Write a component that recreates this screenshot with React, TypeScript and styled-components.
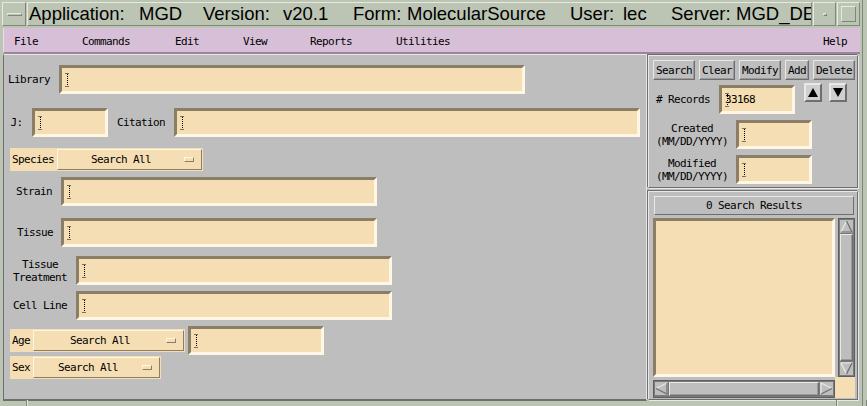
import React from "react";
import styled, { createGlobalStyle } from "styled-components";

const C = {
  frame: "#bcc4b4",
  frameLight: "#e4eadd",
  frameDark: "#7f877a",
  menu: "#d8bfd8",
  menuDark: "#9a869a",
  gray: "#bebebe",
  grayLight: "#e8e8e8",
  grayDark: "#6e6e6e",
  wheat: "#f5deb3",
  wheatDark: "#8b7e66",
  wheatLight: "#fff6e3",
};

const GlobalStyle = createGlobalStyle`
  html, body { margin: 0; padding: 0; }
  body {
    background: ${C.frame};
    width: 867px; height: 406px; overflow: hidden;
    font-family: "DejaVu Sans Mono", "Liberation Mono", monospace;
    font-size: 11px; letter-spacing: -0.62px; color: #000;
  }
  #root { width: 867px; height: 406px; }
`;

const Window = styled.div`
  width: 867px;
  height: 406px;
  box-sizing: border-box;
  display: flex;
  flex-direction: column;
  background:
    linear-gradient(to right, transparent 862px, ${C.frameDark} 862px, ${C.frameDark} 863px, transparent 863px),
    ${C.frame};
`;

/* ---------- title bar ---------- */
const TitleBar = styled.div`
  height: 28px;
  box-sizing: border-box;
  padding: 2px 7px 2px 2px;
  display: flex;
  gap: 1px;
`;

const TitleCell = styled.div<{ $w?: number }>`
  box-sizing: border-box;
  height: 24px;
  border: 1px solid;
  border-color: ${C.frameLight} ${C.frameDark} ${C.frameDark} ${C.frameLight};
  display: flex;
  align-items: center;
  justify-content: center;
  overflow: hidden;
  ${(p) => (p.$w ? `width:${p.$w}px; flex:none;` : "flex:1; justify-content:flex-start; padding-left:1px;")}
`;

const TitleSeg = styled.span<{ $w?: number }>`
  font-family: "Liberation Sans", Arial, sans-serif;
  font-size: 18.5px;
  letter-spacing: 0;
  white-space: nowrap;
  flex: none;
  ${(p) => (p.$w ? `width:${p.$w}px;` : "")}
`;

const MinusBar = styled.div`
  width: 15px;
  height: 3px;
  box-sizing: border-box;
  border-top: 1px solid ${C.frameLight};
  border-bottom: 1px solid ${C.frameDark};
  border-left: 1px solid ${C.frameLight};
  border-right: 1px solid ${C.frameDark};
`;

const Dot = styled.div`
  width: 4px;
  height: 3px;
  box-sizing: border-box;
  border: 1px solid;
  border-color: ${C.frameLight} ${C.frameDark} ${C.frameDark} ${C.frameLight};
`;

const MaxSquare = styled.div`
  width: 15px;
  height: 16px;
  box-sizing: border-box;
  border: 1px solid;
  border-color: ${C.frameLight} ${C.frameDark} ${C.frameDark} ${C.frameLight};
`;

/* ---------- menu bar ---------- */
const MenuBar = styled.div`
  height: 26px;
  box-sizing: border-box;
  margin: 0 7px 0 3px;
  background: ${C.menu};
  border-left: 1px solid #eadbea;
  border-bottom: 2px solid ${C.menuDark};
  display: flex;
  align-items: center;
  padding: 3px 13px 0 10px;
`;

const MenuItem = styled.span<{ $w?: number }>`
  flex: none;
  ${(p) => (p.$w ? `width:${p.$w}px;` : "")}
`;

const MenuSpacer = styled.div`
  flex: 1;
`;

/* ---------- main ---------- */
const Main = styled.div`
  height: 346px;
  margin: 0 7px 0 3px;
  display: grid;
  grid-template-columns: 644px 1fr;
  background: ${C.gray};
`;

const LeftPanel = styled.div`
  box-sizing: border-box;
  border-left: 1px solid ${C.grayDark};
  border-top: 1px solid ${C.grayLight};
  border-bottom: 2px solid;
  border-bottom-color: ${C.grayDark};
  border-right: 1px solid ${C.grayLight};
  display: flex;
  flex-direction: column;
  padding-top: 10px;
`;

const Row = styled.div<{ $mt: number; $pl: number; $gap?: number }>`
  display: flex;
  align-items: center;
  margin-top: ${(p) => p.$mt}px;
  padding-left: ${(p) => p.$pl}px;
  gap: ${(p) => (p.$gap ?? 9)}px;
`;

const Label = styled.span<{ $w?: number }>`
  flex: none;
  text-align: center;
  white-space: pre;
  line-height: 13px;
  ${(p) => (p.$w ? `width:${p.$w}px;` : "")}
`;

const Field = styled.div<{ $w: number; $h?: number }>`
  flex: none;
  width: ${(p) => p.$w}px;
  height: ${(p) => p.$h ?? 29}px;
  box-sizing: border-box;
  background: ${C.wheat};
  border: 3px solid;
  border-color: ${C.wheatDark} ${C.wheatLight} ${C.wheatLight} ${C.wheatDark};
  display: flex;
  align-items: center;
  padding-left: 3px;
`;

const FieldText = styled.span`
  margin-left: -5px;
`;

const Caret = () => (
  <svg width="5" height="14" viewBox="0 0 5 14" style={{ flex: "none" }}>
    <path d="M0.5 0.5h4M0.5 13.5h4" stroke="#000" strokeWidth="1" strokeDasharray="1 1" />
    <path d="M2.5 1v12" stroke="#000" strokeWidth="1" strokeDasharray="1 1" />
  </svg>
);

const OptionMenu = styled.div<{ $w: number }>`
  flex: none;
  width: ${(p) => p.$w}px;
  height: 23px;
  box-sizing: border-box;
  background: ${C.wheat};
  display: flex;
  align-items: stretch;
  padding: 1px 1px 1px 2px;
`;

const OptionLabel = styled.span`
  display: flex;
  align-items: center;
  padding-right: 3px;
`;

const OptionButton = styled.div`
  flex: 1;
  box-sizing: border-box;
  border: 1px solid;
  border-color: ${C.wheatLight} ${C.wheatDark} ${C.wheatDark} ${C.wheatLight};
  display: flex;
  align-items: center;
`;

const OptionText = styled.span`
  flex: 1;
  text-align: center;
`;

const Indicator = styled.span`
  flex: none;
  width: 10px;
  height: 5px;
  box-sizing: border-box;
  margin-right: 7px;
  border: 1px solid;
  border-color: ${C.wheatLight} ${C.wheatDark} ${C.wheatDark} ${C.wheatLight};
`;

/* ---------- right panel ---------- */
const RightPanel = styled.div`
  display: flex;
  flex-direction: column;
  gap: 3px;
  padding: 1px 2px 1px 1px;
  box-sizing: border-box;
`;

const Section = styled.div<{ $h: number }>`
  height: ${(p) => p.$h}px;
  box-sizing: border-box;
  border: 1px solid;
  border-color: ${C.grayLight} ${C.grayDark} ${C.grayDark} ${C.grayLight};
  box-shadow: -1px -1px 0 ${C.grayDark}, 1px 1px 0 ${C.grayLight};
  display: flex;
  flex-direction: column;
`;

const ButtonRow = styled.div`
  display: flex;
  gap: 4px;
  margin: 4px 0 0 4px;
`;

const PushButton = styled.div`
  height: 20px;
  box-sizing: border-box;
  padding: 0 2px;
  border: 1px solid;
  border-color: ${C.grayLight} ${C.grayDark} ${C.grayDark} ${C.grayLight};
  box-shadow: inset -1px -1px 0 #9a9a9a;
  display: flex;
  align-items: center;
  justify-content: center;
`;

const ArrowButton = styled.div`
  width: 18px;
  height: 19px;
  box-sizing: border-box;
  border: 2px solid;
  border-color: ${C.grayLight} ${C.grayDark} ${C.grayDark} ${C.grayLight};
  background: #cfcfcf;
  display: flex;
  align-items: center;
  justify-content: center;
  align-self: flex-start;
  margin-top: -2px;
`;

const ResultsHeader = styled.div`
  height: 19px;
  width: 200px;
  box-sizing: border-box;
  margin: 4px 0 0 5px;
  border: 1px solid;
  border-color: ${C.grayLight} ${C.grayDark} ${C.grayDark} ${C.grayLight};
  display: flex;
  align-items: center;
  justify-content: center;
`;

const Scrolled = styled.div`
  margin: 3px 0 0 4px;
  display: grid;
  grid-template-columns: 182px 17px;
  grid-template-rows: 159px 18px;
  column-gap: 3px;
  row-gap: 3px;
`;

const ListBox = styled.div`
  box-sizing: border-box;
  background: ${C.wheat};
  border: 3px solid;
  border-color: ${C.wheatDark} ${C.wheatLight} ${C.wheatLight} ${C.wheatDark};
`;

const Corner = styled.div`
  background: ${C.wheat};
  margin: -3px 0 0 -3px;
`;

const ScrollBar = styled.div<{ $vertical?: boolean }>`
  box-sizing: border-box;
  background: #7a7a7a;
  border: 1px solid #5e5e5e;
  padding: 1px;
  display: flex;
  flex-direction: ${(p) => (p.$vertical ? "column" : "row")};
  gap: 1px;
`;

const Slider = styled.div`
  flex: 1;
  box-sizing: border-box;
  background: ${C.gray};
  border: 1px solid;
  border-color: ${C.grayLight} ${C.grayDark} ${C.grayDark} ${C.grayLight};
  box-shadow: inset -1px -1px 0 #9a9a9a;
`;

const ScrollArrowBox = styled.div`
  flex: none;
  width: 13px;
  height: 13px;
  background: ${C.gray};
  display: flex;
`;

type Dir = "up" | "down" | "left" | "right";

const ScrollArrow = ({ dir }: { dir: Dir }) => {
  const pts: Record<Dir, [string, string]> = {
    up: ["M1 12L6.5 1", "M6.5 1L12 12H1"],
    down: ["M1 1H12M1 1L6.5 12", "M6.5 12L12 1"],
    left: ["M12 1L1 6.5", "M1 6.5L12 12V1"],
    right: ["M1 12V1L12 6.5", "M12 6.5L1 12"],
  };
  return (
    <ScrollArrowBox>
      <svg width="13" height="13" viewBox="0 0 13 13">
        <path d={pts[dir][0]} stroke={C.grayLight} strokeWidth="1.2" fill="none" />
        <path d={pts[dir][1]} stroke={C.grayDark} strokeWidth="1.2" fill="none" />
      </svg>
    </ScrollArrowBox>
  );
};

const BottomStrip = styled.div`
  flex: 1;
  display: flex;
`;

const StripSeg = styled.div<{ $w?: number }>`
  box-sizing: border-box;
  border-right: 1px solid ${C.frameDark};
  box-shadow: 1px 0 0 ${C.frameLight};
  ${(p) => (p.$w ? `width:${p.$w}px; flex:none;` : "flex:1;")}
`;

const Option = ({ label, w }: { label: string; w: number }) => (
  <OptionMenu $w={w}>
    <OptionLabel>{label}</OptionLabel>
    <OptionButton>
      <OptionText>Search All</OptionText>
      <Indicator />
    </OptionButton>
  </OptionMenu>
);

const TextField = ({ w, value }: { w: number; value?: string }) => (
  <Field $w={w}>
    <Caret />
    {value && <FieldText>{value}</FieldText>}
  </Field>
);

const title: [string, number?][] = [
  ["Application:", 110],
  ["MGD", 64],
  ["Version:", 80],
  ["v20.1", 70],
  ["Form:", 54],
  ["MolecularSource", 163],
  ["User:", 53],
  ["lec", 48],
  ["Server:", 65],
  ["MGD_DEV"],
];

const menus: [string, number][] = [
  ["File", 68],
  ["Commands", 93],
  ["Edit", 68],
  ["View", 67],
  ["Reports", 86],
  ["Utilities", 60],
];

export default function App() {
  return (
    <>
      <GlobalStyle />
      <Window>
        <TitleBar>
          <TitleCell $w={24}>
            <MinusBar />
          </TitleCell>
          <TitleCell>
            {title.map(([t, w]) => (
              <TitleSeg key={t} $w={w}>
                {t}
              </TitleSeg>
            ))}
          </TitleCell>
          <TitleCell $w={23}>
            <Dot />
          </TitleCell>
          <TitleCell $w={23}>
            <MaxSquare />
          </TitleCell>
        </TitleBar>

        <MenuBar>
          {menus.map(([m, w]) => (
            <MenuItem key={m} $w={w}>
              {m}
            </MenuItem>
          ))}
          <MenuSpacer />
          <MenuItem>Help</MenuItem>
        </MenuBar>

        <Main>
          <LeftPanel>
            <Row $mt={0} $pl={4}>
              <Label>Library</Label>
              <TextField w={466} />
            </Row>
            <Row $mt={14} $pl={6}>
              <Label $w={13}>J:</Label>
              <TextField w={76} />
              <Label>Citation</Label>
              <TextField w={466} />
            </Row>
            <Row $mt={11} $pl={6}>
              <Option label="Species" w={193} />
            </Row>
            <Row $mt={6} $pl={12}>
              <Label>Strain</Label>
              <TextField w={316} />
            </Row>
            <Row $mt={12} $pl={13} $gap={8}>
              <Label>Tissue</Label>
              <TextField w={316} />
            </Row>
            <Row $mt={9} $pl={9}>
              <Label $w={54}>{"Tissue\nTreatment"}</Label>
              <TextField w={316} />
            </Row>
            <Row $mt={6} $pl={9}>
              <Label $w={54}>Cell Line</Label>
              <TextField w={316} />
            </Row>
            <Row $mt={6} $pl={6} $gap={3}>
              <Option label="Age" w={175} />
              <TextField w={136} />
            </Row>
            <Row $mt={1} $pl={6}>
              <Option label="Sex" w={151} />
            </Row>
          </LeftPanel>

          <RightPanel>
            <Section $h={133}>
              <ButtonRow>
                <PushButton>Search</PushButton>
                <PushButton>Clear</PushButton>
                <PushButton>Modify</PushButton>
                <PushButton>Add</PushButton>
                <PushButton>Delete</PushButton>
              </ButtonRow>
              <Row $mt={5} $pl={7}>
                <Label>{"# Records"}</Label>
                <TextField w={76} value="33168" />
                <ArrowButton>
                  <svg width="10" height="9" viewBox="0 0 10 9">
                    <path d="M5 0L10 9H0z" fill="#000" />
                  </svg>
                </ArrowButton>
                <ArrowButton style={{ marginLeft: -2 }}>
                  <svg width="10" height="9" viewBox="0 0 10 9">
                    <path d="M0 0H10L5 9z" fill="#000" />
                  </svg>
                </ArrowButton>
              </Row>
              <Row $mt={6} $pl={7} $gap={8}>
                <Label $w={72}>{"Created\n(MM/DD/YYYY)"}</Label>
                <TextField w={76} />
              </Row>
              <Row $mt={6} $pl={7} $gap={8}>
                <Label $w={72}>{"Modified\n(MM/DD/YYYY)"}</Label>
                <TextField w={76} />
              </Row>
            </Section>
            <Section $h={209}>
              <ResultsHeader>0 Search Results</ResultsHeader>
              <Scrolled>
                <ListBox />
                <ScrollBar $vertical>
                  <ScrollArrow dir="up" />
                  <Slider />
                  <ScrollArrow dir="down" />
                </ScrollBar>
                <ScrollBar>
                  <ScrollArrow dir="left" />
                  <Slider />
                  <ScrollArrow dir="right" />
                </ScrollBar>
                <Corner />
              </Scrolled>
            </Section>
          </RightPanel>
        </Main>

        <BottomStrip>
          <StripSeg $w={27} />
          <StripSeg $w={810} />
          <StripSeg />
        </BottomStrip>
      </Window>
    </>
  );
}
